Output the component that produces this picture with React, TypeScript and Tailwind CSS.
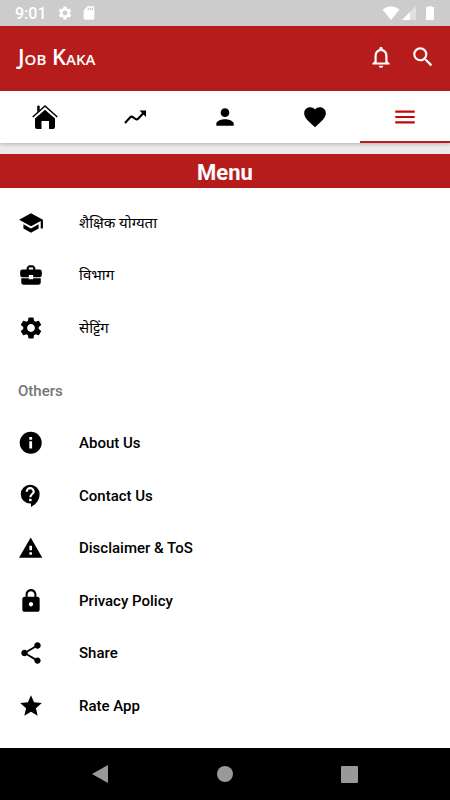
import type { ReactNode } from "react";
import {
  MdBusinessCenter,
  MdFavorite,
  MdLock,
  MdMenu,
  MdNotificationsNone,
  MdPerson,
  MdSchool,
  MdSdCard,
  MdSearch,
  MdSettings,
  MdShare,
  MdStar,
} from "react-icons/md";

type Item = { label: string; icon: ReactNode };

const mainItems: Item[] = [
  { label: "शैक्षिक योग्यता", icon: <MdSchool /> },
  { label: "विभाग", icon: <MdBusinessCenter /> },
  { label: "सेट्टिंग", icon: <MdSettings /> },
];

const otherItems: Item[] = [
  { label: "About Us", icon: <InfoIcon /> },
  { label: "Contact Us", icon: <ContactIcon /> },
  { label: "Disclaimer & ToS", icon: <WarningIcon /> },
  { label: "Privacy Policy", icon: <MdLock /> },
  { label: "Share", icon: <MdShare /> },
  { label: "Rate App", icon: <MdStar /> },
];

const tabs: Item[] = [
  { label: "Home", icon: <HomeIcon /> },
  { label: "Trending", icon: <TrendingIcon /> },
  { label: "Profile", icon: <MdPerson /> },
  { label: "Favourites", icon: <MdFavorite /> },
  { label: "Menu", icon: <MdMenu /> },
];

function Icon({ children }: { children: ReactNode }) {
  return (
    <svg viewBox="0 0 26 26" width="1em" height="1em" fill="currentColor">
      {children}
    </svg>
  );
}

function InfoIcon() {
  return (
    <Icon>
      <circle cx="12.700" cy="12.700" r="11" />
      <path d="M11.300 7h2.800v2.700h-2.800zM11.300 11.300h2.800v7.200h-2.800z" fill="white" />
    </Icon>
  );
}

function ContactIcon() {
  return (
    <Icon>
      <path d="M12.200 1.700a9.400 9.400 0 0 1 9.400 9.400c0 5.800-3.600 10.600-8.600 12.800v-3.300h-.8a9.450 9.450 0 0 1 0-18.900z" />
      <path
        d="M8.700 8.700a3.500 3.500 0 0 1 7 0c0 2.300-3.400 2.400-3.400 5.600"
        fill="none"
        stroke="white"
        strokeWidth="2.200"
      />
      <path d="M11.100 15.800h2.500v2.400h-2.500z" fill="white" />
    </Icon>
  );
}

function WarningIcon() {
  return (
    <Icon>
      <path d="M12.700 2.500L24.300 22.700H1z" />
      <path d="M11.400 10.700H14v4.600h-2.600zM11.400 17.200H14v2.600h-2.600z" fill="white" />
    </Icon>
  );
}

function TrendingIcon() {
  return (
    <Icon>
      <path
        d="M3 19l5-5.500q1.500-1.500 3.200-.2l2.300 1.700q1.500 1 2.800-.5L22 8.500"
        fill="none"
        stroke="currentColor"
        strokeWidth="2.100"
      />
      <path d="M17.500 6.500H24V13z" />
    </Icon>
  );
}

function HomeIcon() {
  return (
    <Icon>
      <path d="M5.200 2.500q0-1 1.200-1t1.300 1V6L5.200 8z" />
      <path d="M.7 13L13 2l12.300 11" fill="none" stroke="currentColor" strokeWidth="1.500" />
      <path d="M13 5.800l10 8.700V23q0 2-2 2h-4v-8H9.500v8H5q-2 0-2-2v-8.500z" />
    </Icon>
  );
}

function StatusBar() {
  return (
    <div className="flex h-[26px] items-center justify-between bg-[#cccccc] pr-4 pl-[15px] text-white">
      <div className="flex items-center">
        <span className="w-[42px] pt-0.5 text-base font-medium">9:01</span>
        <MdSettings className="mr-2 size-4" />
        <MdSdCard className="size-4" />
      </div>
      <div className="flex items-center gap-0.5">
        <svg viewBox="0 0 18 14" className="h-3.5 w-[18px]" fill="currentColor">
          <path d="M9 14L.5 3.500Q9-3 17.500 3.500z" />
        </svg>
        <svg viewBox="0 0 14 14" className="mr-2 size-3.5" fill="currentColor">
          <path d="M0 14L14 0v14z" opacity=".4" />
          <path d="M0 14L8 6v8z" />
        </svg>
        <svg viewBox="0 0 8 14" className="h-3.5 w-2" fill="currentColor">
          <path d="M2.500 0h3v1H8v13H0V1h2.500z" />
        </svg>
      </div>
    </div>
  );
}

function Rows({ items }: { items: Item[] }) {
  return items.map((item) => (
    <li key={item.label} className="flex">
      <button className="flex w-full items-center pl-[18px] text-left">
        <span className="w-[61px] text-[26px]">{item.icon}</span>
        {item.label}
      </button>
    </li>
  ));
}

export default function App() {
  return (
    <div className="flex min-h-screen flex-col bg-white font-[Roboto,'Noto_Sans',sans-serif] text-black">
      <StatusBar />
      <header className="flex h-[65px] items-center justify-between bg-[#b71c1c] pr-3.5 pb-1 pl-[18px] text-white">
        <h1 className="font-['Open_Sans',sans-serif] text-[22px] font-semibold [font-variant-caps:small-caps]">
          Job Kaka
        </h1>
        <div className="flex gap-4 text-[26px]">
          <button aria-label="Notifications">
            <MdNotificationsNone />
          </button>
          <button aria-label="Search">
            <MdSearch />
          </button>
        </div>
      </header>
      <nav className="z-10 grid h-[52px] grid-cols-5 bg-white text-[26px] shadow-[0_1px_4px_rgba(0,0,0,0.25)]">
        {tabs.map((tab, i) => (
          <button
            key={tab.label}
            aria-label={tab.label}
            className={
              i === 4
                ? "flex items-center justify-center border-y-2 border-t-transparent border-b-[#b71c1c] text-[#c40808]"
                : "flex items-center justify-center"
            }
          >
            {tab.icon}
          </button>
        ))}
      </nav>
      <div className="bg-[#ebebeb] pt-[11px]">
        <h2 className="flex h-[34px] items-center justify-center bg-[#b71c1c] pt-0.5 text-[22px] font-bold text-white">
          Menu
        </h2>
      </div>
      <main className="flex-1 pt-[9px] pb-4">
        <ul className="grid min-h-[157px] auto-rows-fr text-[15px]">
          <Rows items={mainItems} />
        </ul>
        <h3 className="flex h-[63px] items-center pt-3 pl-[18px] text-[15px] font-medium text-[#757575]">Others</h3>
        <ul className="grid min-h-[315px] auto-rows-fr text-[15px] font-medium">
          <Rows items={otherItems} />
        </ul>
      </main>
      <footer className="flex h-[52px] items-center justify-center gap-[108px] bg-black pr-0.5 text-[#999999]">
        <button aria-label="Back">
          <svg viewBox="0 0 18 18" className="size-[18px]" fill="currentColor">
            <path d="M17 0v18L1 9z" />
          </svg>
        </button>
        <button aria-label="Home" className="size-4 rounded-full bg-current" />
        <button aria-label="Recent apps" className="size-[17px] rounded-[1px] bg-current" />
      </footer>
    </div>
  );
}
